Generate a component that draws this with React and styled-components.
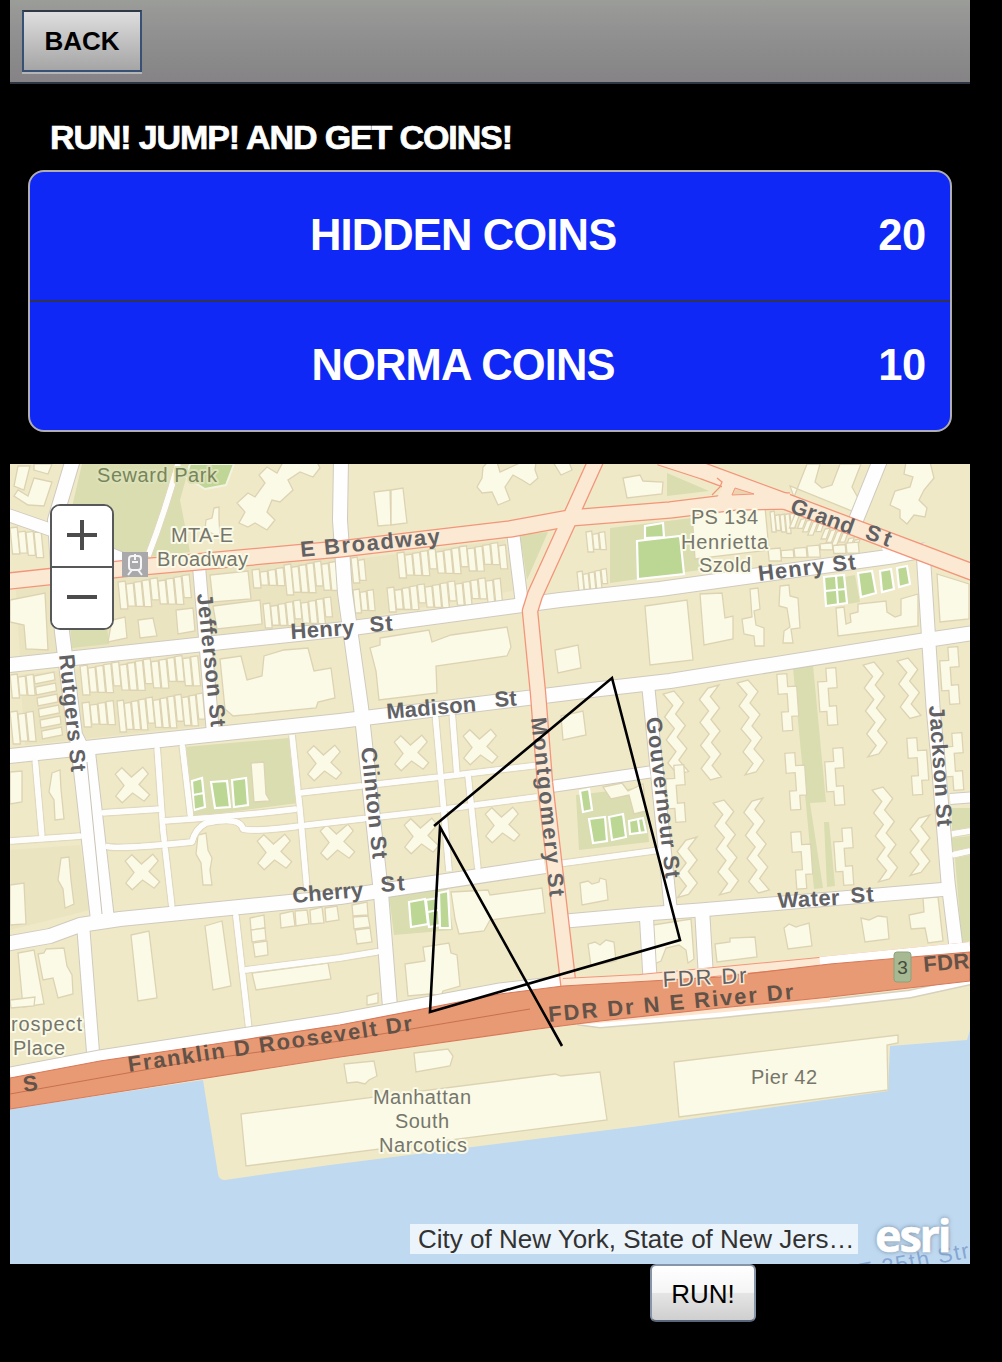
import React from 'react';
import styled, { createGlobalStyle } from 'styled-components';

const GlobalStyle = createGlobalStyle`
  html, body { margin: 0; background: #000; }
  body { font-family: "Liberation Sans", Arial, Helvetica, sans-serif; }
  * { box-sizing: border-box; }
`;

const Screen = styled.div`
  width: 1002px;
  height: 1362px;
  padding: 0 32px 0 10px;
  overflow: hidden;
  background: #000;
  display: flex;
  flex-direction: column;
`;

const Toolbar = styled.header`
  height: 84px;
  flex: none;
  padding: 10px 12px 0;
  border-bottom: 2px solid #2d3642;
  background: linear-gradient(#9b9d99, #929292 35%, #858385);
`;

const BackButton = styled.button`
  display: block;
  width: 120px;
  height: 62px;
  padding: 0;
  border: 2px solid #375073;
  border-top-color: #2f3a46;
  border-radius: 0;
  background: linear-gradient(#dedede, #a5a5a5);
  box-shadow: 0 2px 0 #b5b5b5;
  color: #000;
  font: bold 26px "Liberation Sans", Arial, sans-serif;
  letter-spacing: 0;
`;

const Title = styled.h1`
  margin: 0;
  height: 86px;
  flex: none;
  padding: 33px 40px 0;
  color: #fff;
  font-size: 34px;
  line-height: 40px;
  letter-spacing: -1.12px;
  white-space: nowrap;
  -webkit-text-stroke: 0.7px #fff;
`;

const CoinList = styled.ul`
  list-style: none;
  margin: 0 18px 32px;
  padding: 0;
  height: 262px;
  flex: none;
  border: 2px solid #b0adb0;
  border-radius: 16px;
  background: #1028f5;
  overflow: hidden;
`;

const CoinRow = styled.li`
  display: grid;
  grid-template-columns: 1fr auto;
  align-items: center;
  height: ${(p) => (p.$last ? 128 : 130)}px;
  padding: 0 24px 2px 0;
  border-bottom: ${(p) => (p.$last ? 'none' : '2px solid #33334d')};
  color: #fff;
  font-size: 43.5px;
  font-weight: bold;
`;

const CoinName = styled.span`
  text-align: center;
  padding-left: 18px;
  letter-spacing: -0.85px;
`;

const CoinValue = styled.span`
  letter-spacing: -0.3px;
`;

const MapFrame = styled.section`
  position: relative;
  height: 800px;
  flex: none;
  overflow: hidden;
  background: #bfd9f1;
`;

const MapCanvas = styled.svg`
  display: block;
  width: 960px;
  height: 800px;
  font-family: "Liberation Sans", Arial, sans-serif;
`;

const ZoomControl = styled.div`
  position: absolute;
  left: 40px;
  top: 40px;
  width: 64px;
  height: 126px;
  display: flex;
  flex-direction: column;
  border: 2px solid #57585a;
  border-radius: 10px;
  background: #fff;
  overflow: hidden;
`;

const ZoomButton = styled.button`
  flex: 1;
  display: grid;
  place-items: center;
  padding: 0 0 3px;
  border: 0;
  background: #fff;
  & + & { border-top: 2px solid #57585a; }
`;

const MapFooter = styled.div`
  position: absolute;
  left: 400px;
  bottom: 10px;
  display: flex;
  align-items: flex-end;
  gap: 17px;
`;

const Attribution = styled.span`
  width: 448px;
  height: 30px;
  padding: 0 2px 0 8px;
  background: rgba(255, 255, 255, 0.7);
  color: #323232;
  font-size: 26px;
  line-height: 30px;
  letter-spacing: 0;
  white-space: nowrap;
  overflow: hidden;
`;

const Esri = styled.span`
  font: bold 45px/45px "Open Sans", sans-serif;
  letter-spacing: -2.2px;
  color: #fff;
  -webkit-text-stroke: 0.6px #fff;
  text-shadow: 0 0 5px #8299ad, 0 0 3px #8fa5b8;
  margin-bottom: -3px;
`;

const Actions = styled.div`
  padding-left: 640px;
`;

const RunButton = styled.button`
  display: block;
  width: 106px;
  height: 58px;
  padding: 3px 0 0;
  border: 2px solid #8795a9;
  border-bottom-color: #596579;
  border-radius: 6px;
  background: linear-gradient(#fff, #f5f5f5 49%, #e5e5e5 50%, #cfcfcf);
  color: #000;
  font: 26px "Liberation Sans", Arial, sans-serif;
`;

const minorRoads = [
  'M35 758L42 838', 'M10 841L82 836', 'M157 746L163 830L172 908', 'M182 743L191 820',
  'M100 813L162 809', 'M163 821Q230 817 297 809', 'M105 846Q115 850 192 842Q195 829 206 823Q240 816 243 829Q255 832 300 826L430 811L537 797',
  'M292 735L300 810L307 890', 'M299 793L440 777L540 765', 'M435 711L442 790L449 871', 'M452 711L457 776',
  'M468 775L478 870', 'M235 908L249 1030', 'M245 970L340 958L382 951', 'M178 464Q165 512 148 556',
  'M952 834L970 831', 'M952 855L970 851', 'M550 865L660 850',
];

const mainRoads = [
  ['M74 456L55 520L62 632L75 735L85 755', 14], ['M8 515L60 533L130 562', 12],
  ['M341 460L340 520L345 593L361 707L381 893L391 1020', 14],
  ['M0 666L345 629L560 600L660 589L895 556L926 550', 14],
  ['M0 757L340 721L600 689L670 681L920 641L980 632', 14],
  ['M83 748L103 924', 23], ['M83 924L94 1065', 12],
  ['M0 945L50 936L80 925L120 919L340 897L545 866', 14],
  ['M566 921L645 914L700 910L948 889', 13], ['M646 910L650 978', 13], ['M702 908L706 978', 14],
  ['M648 684L671 912', 12], ['M548 787L650 772', 11], ['M950 799L975 797', 10],
  ['M881 458L856 520', 14], ['M885 553L896 545', 12],
  ['M923 550L933 707L938 760L948 882L957 955', 13],
  ['M199 566L213 734', 12], ['M513 532L522 604', 12],
];

const arterials = [
  ['M0 582L130 568L340 549L510 529L570 518L670 510L735 502L790 501', 15],
  ['M598 456L570 518L535 595L530 611L538 693L545 783L569 990', 14],
  ['M660 457L703 471L787 502L980 575', 15],
];

const buildings = [
  'M18 466H30L24 490L14 486Z', 'M34 464H52L48 474L34 470Z', 'M34 478L52 482L44 506L28 505L14 496L18 490L28 496Z',
  'M248 493L237 503L245 512L239 523L248 527L255 523L267 530L275 520L267 512L272 500L280 502L293 490L288 480L300 472L313 477L320 468L317 462H283L277 473L267 467L259 475L265 483L255 497Z',
  'M483 467L482 478L477 487L482 493L492 492L498 505L510 500L505 487L513 475L522 480L530 485L538 478L535 470L536 462H522L500 472L497 462H488Z',
  'M553 462L561 475L572 470L569 462Z',
  'M214 508L219 507V518L220 537L205 530L206 520L212 518Z',
  'M374 492L390 490L391 525L378 526Z', 'M391 490L403 488L407 523L391 525Z',
  'M623 478L640 475L643 481L663 482L662 494L627 498Z',
  'M10 600L45 593L48 650L26 649L24 625L10 622Z',
  'M112 620L125 617L127 638L108 642Z',
  'M138 620L153 618L157 636L140 638Z', 'M176 610L193 608L195 631L178 634Z',
  'M210 575L248 571L251 599L213 602Z', 'M213 606L260 600L262 624L217 629Z',
  'M220 659L241 656L247 680L262 676L264 656L284 650L308 648L314 671L331 668L335 698L318 702L316 708L233 716L225 709Z',
  'M380 638L429 630L432 642L451 635L507 627L511 647L507 656L436 666L437 693L379 700L376 671L370 648L380 645Z',
  'M555 650L578 645L581 668L558 673Z', 'M645 606L687 600L693 660L650 665Z',
  'M561 716L583 711L586 735L563 740Z',
  'M700 594L722 593L725 618L733 616V639L704 645Z',
  'M750 589L758 588L760 609L754 611L756 625L764 628V646H755L754 636L744 634L742 619L752 617Z',
  'M780 586L789 585L790 596L798 598L800 628L791 629L793 643H783L784 631L790 627L787 608L779 606Z',
  'M836 608L844 607L846 624L851 622L850 614L858 612V604L886 601L887 612L895 617L901 615V599L918 594V626L838 636Z',
  'M937 574L969 584V619L940 622Z',
  'M52 773L60 770L61 789L64 819L55 820L54 800L49 792Z', 'M10 772L22 771V802L10 804Z',
  'M251 763L264 762L266 794L270 801L254 802Z', 'M61 858L69 857L71 880L74 904L65 908L63 889L58 880Z',
  'M10 885L24 883L26 924L10 925Z', 'M198 835L206 833L208 850L212 858L210 870L212 885H203L201 863L196 854Z',
  'M18 953L34 950L44 1004L23 1007Z', 'M38 954L44 953L46 949L64 948L67 966L72 975L73 994L58 998L53 978L43 980Z',
  'M131 935L149 931L157 998L138 1001Z', 'M205 926L222 921L231 986L213 990Z',
  'M252 973L328 963L331 979L256 990Z', 'M250 918L264 915L265 928L251 930Z', 'M251 930L265 928L266 940L252 942Z', 'M253 943L267 941L268 955L255 957Z',
  'M280 914L293 911L295 926L281 928Z', 'M295 911L307 910L309 924L296 926Z', 'M310 910L322 907L324 923L311 924Z', 'M325 908L337 906L339 920L326 922Z',
  'M352 905L367 902L368 915L353 916Z', 'M353 917L368 916L370 927L354 929Z', 'M355 930L370 928L372 942L357 944Z',
  'M451 892L488 890L490 895L542 888L545 913L490 920L484 931L459 934L455 919Z',
  'M405 964L425 961L423 947L449 943L451 953L457 955L460 986L443 991L441 996L430 994L408 996Z',
  'M367 996L378 993V1003L367 1005Z', 'M580 883L588 881L592 884L599 882L600 878L606 880L608 900L582 905Z',
  'M588 944L595 942L600 945L606 940L614 942L616 961L591 966Z', 'M653 925L691 919L694 959L688 963L686 950L679 945L666 948L661 961L654 964Z',
  'M603 787L622 783L628 791L643 784L646 811L634 814L629 795L611 799Z',
  'M715 944L730 942V938L755 937L757 957L717 962Z', 'M784 928L789 924L796 927L802 925L809 923L812 946L788 949Z',
  'M861 918L869 920L878 916L887 917L889 939L865 942Z', 'M909 915L924 912L923 898L938 897L943 941L928 943L925 928L911 929Z',
  'M794 497L807 464H820L815 482L822 488L832 485L840 464H861L852 487L862 505L852 511L790 486Z',
  'M906 462L904 474L913 477L910 487L895 491L890 505L900 510V518L907 524L914 515L925 517L927 508L919 500L924 490L934 478L930 462Z',
  'M10 1000L35 997L34 1006L11 1008Z', 'M344 1064L374 1061L377 1076L369 1080L365 1084L357 1082L347 1083Z', 'M414 1053L448 1049L453 1056L450 1066L416 1072Z',
  'M241 1114L555 1074L561 1076L600 1072L607 1120L246 1166Z', 'M674 1062L898 1035V1043L887 1045L888 1090L679 1117Z',
  'M692 512L765 507L769 550L695 559Z',
];

const crosses = [[132, 785], [324, 763], [411, 753], [480, 747], [142, 872], [274, 852], [337, 842], [421, 836], [502, 825]];
const courts = [
  'M637 541L680 536L684 574L638 579Z', 'M645 526L663 523L664 537L645 538Z',
  'M824 577L844 575L847 603L826 606Z', 'M858 573L872 571L876 593L861 597Z', 'M880 571L891 569L894 589L882 592Z', 'M897 568L907 566L910 584L899 587Z',
  'M192 781L202 778L205 807L194 810Z', 'M211 782L227 781L230 807L215 808Z', 'M232 780L246 778L248 805L234 807Z',
  'M409 902L425 899L428 924L411 927Z', 'M426 900L438 898L440 925L429 927Z', 'M439 893L448 891L450 928L440 928Z',
  'M580 791L589 789L592 810L583 812Z', 'M589 819L605 817L607 841L593 843Z', 'M609 817L623 814L626 837L612 840Z', 'M629 821L643 818L646 832L630 834Z',
];

const Cross = ({ x, y, scale = 1 }) => (
  <path transform={`translate(${x} ${y}) rotate(-4) scale(${scale})`} d="M-16 -12L-9 -18L0 -8L12 -17L17 -10L7 0L17 11L11 17L0 8L-11 17L-17 10L-8 0Z" />
);

const ZigZag = ({ x, y, n, lean = 0, flip = 1 }) => {
  const left = [];
  const right = [];
  for (let i = 0; i <= n; i += 1) {
    const dx = (i % 2 ? 9 : 0) * flip + i * lean;
    left.push(`${x - 6 + dx} ${y + i * 11.5}`);
    right.unshift(`${x + 5 + dx} ${y - 3 + i * 11.5}`);
  }
  return <path d={`M${left.join('L')}L${right.join('L')}Z`} />;
};
const zigzags = [
  [669, 694, 7, 0.8], [714, 688, 8, 0.3, -1], [743, 683, 8, 1], [869, 665, 8, 0.6], [903, 661, 5, 0.8],
  [692, 840, 5, 0.1, -1], [719, 803, 8, 0.8], [758, 801, 8, 0.8, -1], [878, 790, 8, 0.8], [925, 818, 5, 0, -1],
];

const brackets = [
  [782, 677, 1], [831, 671, -1], [790, 756, 1], [838, 751, -1], [796, 835, 1], [847, 831, -1], [912, 741, 1], [679, 768, -1], [957, 736, -1], [953, 650, -1],
];

const RowHouses = ({ x, y, n, w = 8, h, slope = -0.1, lean = 0.1 }) =>
  Array.from({ length: n }, (_, i) => {
    const left = x + i * w;
    const top = y + i * w * slope + ((i * 7) % 4);
    const tall = h - ((i * 5) % 7);
    return <path key={i} d={`M${left} ${top}L${left + w - 0.8} ${top - 1}L${left + w - 0.8 + tall * lean} ${top + tall}L${left + tall * lean} ${top + tall}Z`} />;
  });
const houseRows = [
  [118, 582, 9, 8, 27], [252, 570, 4, 8, 18], [284, 565, 7, 7.5, 30], [263, 604, 9, 7.6, 24],
  [397, 553, 14, 7.8, 25], [387, 588, 15, 7.6, 24], [351, 558, 2, 7, 25], [353, 590, 3, 7, 23],
  [80, 666, 15, 7.9, 29], [82, 703, 4, 8, 24], [117, 701, 12, 7.2, 31], [10, 528, 4, 8, 26, 0.15],
  [586, 532, 3, 6.5, 20], [577, 572, 5, 6, 20], [770, 512, 5, 5, 20, 0.1, 0.1], [795, 514, 11, 6, 14, 0.4, -0.4], [768, 549, 7, 13, 12],
];

const streetLabels = [
  ['E Broadway', 301, 557, -5.5, 140], ['Henry', 291, 639, -4, 64], ['St', 370, 632, -4, 23],
  ['Henry St', 759, 581, -7, 98], ['Madison', 387, 719, -5, 90], ['St', 495, 707, -4, 22],
  ['Cherry', 293, 903, -5, 71], ['St', 381, 892, -4, 24], ['Water', 778, 908, -3, 62], ['St', 851, 903, -4, 23],
  ['Rutgers St', 59, 655, 84, 118], ['Jefferson St', 197, 594, 84, 134], ['Clinton St', 361, 748, 84, 112],
  ['Montgomery St', 531, 718, 84, 180], ['Gouverneur St', 646, 718, 83, 162], ['Jackson St', 929, 706, 86, 121],
  ['Grand', 789, 512, 20, 66], ['St', 864, 538, 20, 26], ['FDR Dr', 663, 987, -3, 84],
  ['Franklin D Roosevelt Dr', 129, 1072, -8.3, 287], ['FDR Dr N E River Dr', 549, 1022, -5.4, 246],
  ['S', 24, 1092, -8, 14], ['FDR', 924, 972, -5, 46],
];
const placeLabels = [
  ['Seward Park', 97, 482, 120, '#77855b'], ['MTA-E', 171, 542, 62], ['Broadway', 157, 566, 91],
  ['PS 134', 691, 524, 67], ['Henrietta', 681, 549, 87], ['Szold', 699, 572, 52], ['rospect', 11, 1031, 71], ['Place', 13, 1055, 52],
  ['Manhattan', 373, 1104, 98], ['South', 395, 1128, 54], ['Narcotics', 379, 1152, 88], ['Pier 42', 751, 1084, 66],
];

const Casing = ({ d, width, edge, fill }) => (
  <g fill="none" strokeLinejoin="round"><path d={d} stroke={edge} strokeWidth={width + 2.4} /><path d={d} stroke={fill} strokeWidth={width} /></g>
);

const StreetMap = () => (
  <MapCanvas viewBox="10 464 960 800">
    <path fill="#efe9c8" d="M10 464H970V1030L967 1040L890 1046L888 1091L640 1126L330 1165L225 1180Q219 1180 218 1174L203 1080L10 1109Z" />
    <path fill="#e8dfb9" opacity=".5" d="M15 575L190 560L335 550L340 622L20 656ZM20 675L200 655L212 725L25 745ZM10 850L80 845L90 910L10 930ZM350 560L505 540L517 590L353 620Z" />
    <g fill="#d9ddb0">
      <path d="M82 464H190L180 500L190 552L125 560L66 533Z" /><path d="M70 622L107 627L109 644L72 648Z" />
      <path d="M184 747L289 738L298 803L193 817Z" /><path d="M389 895L447 888L453 930L394 935Z" /><path d="M576 795L644 787L649 842L579 850Z" />
      <path d="M667 473L709 491L667 496Z" /><path d="M520 535L548 532L527 580Z" /><path d="M610 528L700 517L700 570L610 583Z" />
      <path d="M793 668L813 665L826 802L810 803L823 888L814 889Z" /><path d="M824 822L829 822L835 886L827 887Z" />
      <path d="M844 577L855 575L860 602L848 604ZM952 808H970V829L952 831ZM952 838L970 836V849L952 851ZM955 858L970 855V941L962 944Z" />
    </g>
    <path d="M190 464H234L226 485L205 489L186 477Z" fill="#bfd696" stroke="#f3f4df" strokeWidth="2" />
    <g fill="#fafae6" stroke="#ddd3b3" strokeWidth="1.3">
      {houseRows.map(([x, y, n, w, h, slope, lean]) => <RowHouses key={`${x}-${y}`} x={x} y={y} n={n} w={w} h={h} slope={slope} lean={lean} />)}
      {[0, 1, 2, 3, 4, 5].map((i) => <path key={i} d={`M${34 + i * 1.5} ${676 + i * 11}L${54 + i * 1.5} ${672 + i * 11}L${55 + i * 1.5} ${680 + i * 11}L${35 + i * 1.5} ${684 + i * 11}Z`} />)}
      <RowHouses x={10} y={675} n={3} w={8} h={23} /><RowHouses x={10} y={712} n={3} w={8} h={32} />
      {buildings.map((d) => <path key={d} d={d} />)}
      {crosses.map(([x, y, s]) => <Cross key={`${x}-${y}`} x={x} y={y} scale={s} />)}
      {zigzags.map(([x, y, n, lean, flip]) => <ZigZag key={`${x}-${y}`} x={x} y={y} n={n} lean={lean} flip={flip} />)}
      {brackets.map(([x, y, f]) => <path key={`${x}-${y}`} transform={`translate(${x} ${y}) scale(${f} 1) rotate(${f * -4})`} d="M-5 -3H5V10H14V40H7V54H-3V35H4V17H-5Z" />)}
    </g>
    <g fill="#bcd694" stroke="#fff" strokeWidth="2.2">{courts.map((d) => <path key={d} d={d} />)}<path d="M825 591L846 589M836 576L838 604M193 795L204 793M438 910L428 912M638 820L640 833" /></g>
    {minorRoads.map((d) => <Casing key={d} d={d} width={5.5} edge="#e1d9bd" fill="#fdfdfc" />)}
    <g fill="none" strokeLinejoin="round">
      {mainRoads.map(([d, w]) => <path key={d} d={d} stroke="#cfcabd" strokeWidth={w + 2} />)}
      {mainRoads.map(([d, w]) => <path key={d} d={d} stroke="#fefefe" strokeWidth={w} />)}
      {minorRoads.map((d) => <path key={d} d={d} stroke="#fdfdfc" strokeWidth={5} />)}
      <path d="M87 762L102 914" stroke="#c9c3b5" />
      <path d="M10 1073L100 1056L249 1033L340 1019L500 989L570 981" stroke="#cfcabd" strokeWidth="13" />
      <path d="M10 1073L100 1056L249 1033L340 1019L500 989L570 981" stroke="#fff" strokeWidth="11" />
      {arterials.map(([d, w]) => <path key={d} d={d} stroke="#f3957a" strokeWidth={w + 2.6} />)}
      {arterials.map(([d, w]) => <path key={d} d={d} stroke="#fce9d3" strokeWidth={w} />)}
    </g>
    <path d="M706 471L755 490L740 499L716 500L722 488V478Z" fill="#fce9d3" />
    <path d="M712 495L720 487L722 482L717 478" fill="none" stroke="#f3957a" strokeWidth="1.3" />
    <path d="M732 495L735 488L754 494Z" fill="#efd3b0" stroke="#f3957a" />
    <path d="M563 983L640 979L830 961L970 947" fill="none" stroke="#f3957a" strokeWidth="10" />
    <path d="M563 983L640 979L830 961" fill="none" stroke="#fce9d3" strokeWidth="8" />
    <path d="M820 962L970 947" fill="none" stroke="#fff" strokeWidth="10" />
    <path d="M578 1021L600 1024L720 1014L840 1002L910 994L970 981" fill="none" stroke="#d7d0bb" strokeWidth="9" />
    <path d="M578 1021L600 1024L720 1014L840 1002L910 994L970 981" fill="none" stroke="#fff" strokeWidth="6" />
    <path d="M580 1022L720 1010L830 999" fill="none" stroke="#fbe3cc" strokeWidth="5" />
    <path d="M10 1078L100 1061L249 1039L340 1025L500 994L563 986L720 977L830 964L970 952V981L830 997L720 1008L600 1021L530 1030L340 1057L200 1079L10 1109Z" fill="#e89a74" stroke="#d9795a" strokeWidth="1.2" />
    <path d="M10 1094L200 1060L340 1041L530 1009" fill="none" stroke="#c7714f" strokeWidth="1" />
    <g><rect x="122" y="552" width="26" height="25" fill="#a9a9ab" /><rect x="129" y="556" width="12" height="14" rx="3" fill="none" stroke="#f5f5f5" strokeWidth="2" /><path d="M128 575L132 570H138L142 575M132 562H138M135 554V560" fill="none" stroke="#f5f5f5" strokeWidth="2" /></g>
    <g paintOrder="stroke" strokeLinejoin="round" fontSize="20">
      {placeLabels.map(([t, x, y, w, c]) => <text key={`${t}-${y}`} x={x} y={y} textLength={w} fill={c || '#76766c'} stroke={c ? '#dde1b8' : '#fafae6'} strokeWidth="4">{t}</text>)}
    </g>
    <g fill="#626264" fontSize="22" fontWeight="bold">
      {streetLabels.map(([t, x, y, a, w]) => <text key={`${t}-${x}-${y}`} transform={`translate(${x} ${y}) rotate(${a})`} textLength={w} fill={y > 960 && t !== 'FDR Dr' ? '#625248' : '#626264'} fontWeight={t === 'FDR Dr' ? 'normal' : 'bold'} stroke={t === 'FDR Dr' ? '#fbe9d5' : 'none'} strokeWidth="3" paintOrder="stroke">{t}</text>)}
    </g>
    <rect x="894" y="952" width="17" height="30" rx="3" fill="#a6b993" stroke="#8ba27d" /><text x="902.5" y="974" textAnchor="middle" fontSize="19" fill="#454b3c">3</text>
    <text transform="translate(860 1279) rotate(-11)" fontSize="22" textLength="112" fill="#86a6d2">E 35th Str</text>
    <path d="M434 826L612 678L680 940L430 1012L440 827L562 1046" fill="none" stroke="#000" strokeWidth="2.6" />
  </MapCanvas>
);

const SignIcon = ({ plus }) => (
  <svg width="32" height="32" viewBox="0 0 32 32"><path d={plus ? 'M1 16H31M16 1V31' : 'M1 16H31'} stroke="#4c4c4c" strokeWidth="4" /></svg>
);

export default function App() {
  return (
    <Screen>
      <GlobalStyle />
      <Toolbar><BackButton>BACK</BackButton></Toolbar>
      <Title>RUN! JUMP! AND GET COINS!</Title>
      <CoinList>
        <CoinRow><CoinName>HIDDEN COINS</CoinName><CoinValue>20</CoinValue></CoinRow>
        <CoinRow $last><CoinName>NORMA COINS</CoinName><CoinValue>10</CoinValue></CoinRow>
      </CoinList>
      <MapFrame>
        <StreetMap />
        <ZoomControl>
          <ZoomButton aria-label="Zoom in"><SignIcon plus /></ZoomButton>
          <ZoomButton aria-label="Zoom out"><SignIcon /></ZoomButton>
        </ZoomControl>
        <MapFooter>
          <Attribution>City of New York, State of New Jers…</Attribution>
          <Esri>esri</Esri>
        </MapFooter>
      </MapFrame>
      <Actions><RunButton>RUN!</RunButton></Actions>
    </Screen>
  );
}
